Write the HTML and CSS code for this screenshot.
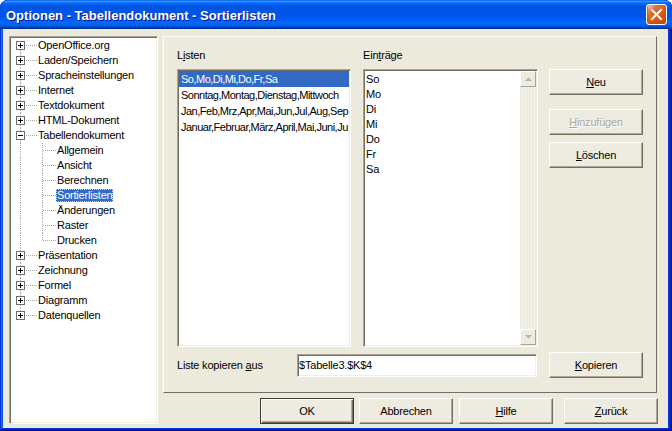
FILE: index.html
```html
<!DOCTYPE html>
<html lang="de">
<head>
<meta charset="utf-8">
<title>Optionen - Tabellendokument - Sortierlisten</title>
<link rel="stylesheet" href="styles.css">
</head>
<body>
<div class="window">
  <div class="titlebar">
    <span class="title">Optionen - Tabellendokument - Sortierlisten</span>
    <span class="close"><svg width="13" height="13" viewBox="0 0 13 13"><path d="M2 2L11 11M11 2L2 11" stroke="#fff" stroke-width="2" stroke-linecap="square"/></svg></span>
  </div>
  <div class="frame">
    <div class="client">
      <div class="tree sunken">
        <div class="row first"><span class="exp"><i class="box plus"></i><i class="hl"></i></span><span class="txt">OpenOffice.org</span></div>
        <div class="row"><span class="exp"><i class="box plus"></i><i class="hl"></i></span><span class="txt">Laden/Speichern</span></div>
        <div class="row"><span class="exp"><i class="box plus"></i><i class="hl"></i></span><span class="txt">Spracheinstellungen</span></div>
        <div class="row"><span class="exp"><i class="box plus"></i><i class="hl"></i></span><span class="txt">Internet</span></div>
        <div class="row"><span class="exp"><i class="box plus"></i><i class="hl"></i></span><span class="txt">Textdokument</span></div>
        <div class="row"><span class="exp"><i class="box plus"></i><i class="hl"></i></span><span class="txt">HTML-Dokument</span></div>
        <div class="row"><span class="exp"><i class="box minus"></i><i class="hl"></i></span><span class="txt">Tabellendokument</span></div>
        <div class="row child"><span class="exp"></span><span class="cexp"><i class="hl"></i></span><span class="txt">Allgemein</span></div>
        <div class="row child"><span class="exp"></span><span class="cexp"><i class="hl"></i></span><span class="txt">Ansicht</span></div>
        <div class="row child"><span class="exp"></span><span class="cexp"><i class="hl"></i></span><span class="txt">Berechnen</span></div>
        <div class="row child"><span class="exp"></span><span class="cexp"><i class="hl"></i></span><span class="txt sel">Sortierlisten</span></div>
        <div class="row child"><span class="exp"></span><span class="cexp"><i class="hl"></i></span><span class="txt">Änderungen</span></div>
        <div class="row child"><span class="exp"></span><span class="cexp"><i class="hl"></i></span><span class="txt">Raster</span></div>
        <div class="row child clast"><span class="exp"></span><span class="cexp"><i class="hl"></i></span><span class="txt">Drucken</span></div>
        <div class="row"><span class="exp"><i class="box plus"></i><i class="hl"></i></span><span class="txt">Präsentation</span></div>
        <div class="row"><span class="exp"><i class="box plus"></i><i class="hl"></i></span><span class="txt">Zeichnung</span></div>
        <div class="row"><span class="exp"><i class="box plus"></i><i class="hl"></i></span><span class="txt">Formel</span></div>
        <div class="row"><span class="exp"><i class="box plus"></i><i class="hl"></i></span><span class="txt">Diagramm</span></div>
        <div class="row last"><span class="exp"><i class="box plus"></i><i class="hl"></i></span><span class="txt">Datenquellen</span></div>
      </div>
      <div class="main">
        <div class="panel">
          <div class="cols">
            <div class="col lists">
              <div class="label">L<u>i</u>sten</div>
              <div class="listbox sunken">
                <div class="lb-row sel">So,Mo,Di,Mi,Do,Fr,Sa</div>
                <div class="lb-row">Sonntag,Montag,Dienstag,Mittwoch</div>
                <div class="lb-row">Jan,Feb,Mrz,Apr,Mai,Jun,Jul,Aug,Sep</div>
                <div class="lb-row">Januar,Februar,März,April,Mai,Juni,Ju</div>
              </div>
            </div>
            <div class="col entries">
              <div class="label">Ein<u>t</u>räge</div>
              <div class="listbox sunken scrolled">
                <div class="items">
                  <div class="en-row">So</div>
                  <div class="en-row">Mo</div>
                  <div class="en-row">Di</div>
                  <div class="en-row">Mi</div>
                  <div class="en-row">Do</div>
                  <div class="en-row">Fr</div>
                  <div class="en-row">Sa</div>
                </div>
                <div class="scrollbar">
                  <span class="sb-btn"><svg width="7" height="4" viewBox="0 0 7 4"><path d="M0 4L3.5 0.5L7 4Z" fill="#B5B2A6"/></svg></span>
                  <span class="sb-track"></span>
                  <span class="sb-btn"><svg width="7" height="4" viewBox="0 0 7 4"><path d="M0 0L3.5 3.5L7 0Z" fill="#B5B2A6"/></svg></span>
                </div>
              </div>
            </div>
            <div class="btncol">
              <span class="btn b-neu"><u>N</u>eu</span>
              <span class="btn b-add disabled"><u>H</u>inzufügen</span>
              <span class="btn b-del"><u>L</u>öschen</span>
            </div>
          </div>
          <div class="copyrow">
            <span class="copylabel">Liste kopieren <u>a</u>us</span>
            <span class="input sunken">$Tabelle3.$K$4</span>
            <span class="btn"><u>K</u>opieren</span>
          </div>
        </div>
        <div class="actions">
          <span class="btn default a-ok">OK</span>
          <span class="btn a-cancel">Abbrechen</span>
          <span class="btn a-help"><u>H</u>ilfe</span>
          <span class="btn"><u>Z</u>urück</span>
        </div>
      </div>
    </div>
  </div>
</div>
</body>
</html>
```

FILE: styles.css
```css
* { box-sizing: border-box; }
html, body { margin: 0; padding: 0; }
body {
  background: #ffffff;
  font-family: "Liberation Sans", Arial, sans-serif;
  font-size: 11px;
  letter-spacing: -0.2px;
  color: #000;
}
u { text-decoration: underline; text-underline-offset: 1px; }

.window {
  width: 672px;
  height: 431px;
  display: flex;
  flex-direction: column;
  background: #0831D9;
  border-radius: 8px 8px 0 0;
  overflow: hidden;
  box-shadow: inset -1px -1px #00138c, inset 1px 1px #0831d9, inset -2px -2px #001ea0, inset 2px 2px #166aee, inset -3px -3px #003bda, inset 3px 3px #0855dd;
}

.titlebar {
  height: 29px;
  flex: none;
  display: flex;
  align-items: center;
  justify-content: space-between;
  padding: 0 5px 0 6px;
  background: linear-gradient(to bottom, #0058EE 0%, #3A93FF 4%, #288EFF 6%, #127DFF 8%, #036FFC 10%, #0262EE 14%, #0057E5 20%, #0054E3 24%, #0055EB 56%, #005BF5 66%, #026AFE 76%, #0062EF 86%, #0052D6 92%, #0040AB 94%, #003092 100%);
  border-radius: 8px 8px 0 0;
}
.title {
  color: #fff;
  font-weight: bold;
  font-size: 13px;
  letter-spacing: 0;
  text-shadow: 1px 1px #0F1089;
  padding-top: 1px;
}
.close {
  width: 21px;
  height: 21px;
  border: 1px solid #fff;
  border-radius: 3px;
  display: flex;
  align-items: center;
  justify-content: center;
  background: radial-gradient(circle at 90% 90%, #CC4600 0%, #DC6527 55%, #CD7546 70%, #FFCCB2 90%, #fff 100%);
  box-shadow: inset 0 -1px 2px 1px #DA4600;
}

.frame {
  flex: 1;
  display: flex;
  padding: 0 4px 4px 3px;
}
.client {
  flex: 1;
  display: flex;
  gap: 5px;
  padding: 7px 10px 4px 6px;
  background: repeating-linear-gradient(90deg, #ECE9D8 0px, #ECE9D8 3px, #EFECE1 3px, #EFECE1 4px);
}

.sunken {
  background: #fff;
  border: 1px solid;
  border-color: #A7A496 #fff #fff #A7A496;
  box-shadow: inset 1px 1px #716F64, inset -1px -1px #F1EFE2;
  padding: 1px;
}

/* tree */
.tree {
  width: 149px;
  flex: none;
  overflow: hidden;
}
.row {
  display: flex;
  align-items: center;
  height: 15px;
  white-space: nowrap;
}
.exp, .cexp {
  flex: none;
  height: 15px;
  display: flex;
  align-items: center;
}
.exp {
  width: 26px;
  background: linear-gradient(to bottom, #A8A8A8 1px, transparent 1px) 9px 0 / 1px 2px repeat-y;
}
.first .exp {
  background: linear-gradient(#fff, #fff) 0 0 / 100% 7px no-repeat,
              linear-gradient(to bottom, #A8A8A8 1px, transparent 1px) 9px 0 / 1px 2px repeat-y;
}
.last .exp {
  background: linear-gradient(#fff, #fff) 0 8px / 100% 7px no-repeat,
              linear-gradient(to bottom, #A8A8A8 1px, transparent 1px) 9px 0 / 1px 2px repeat-y;
}
.cexp {
  width: 19px;
  background: linear-gradient(to bottom, #A8A8A8 1px, transparent 1px) 5px 0 / 1px 2px repeat-y;
}
.clast .cexp {
  background: linear-gradient(#fff, #fff) 0 8px / 100% 7px no-repeat,
              linear-gradient(to bottom, #A8A8A8 1px, transparent 1px) 5px 0 / 1px 2px repeat-y;
}
.box {
  flex: none;
  width: 9px;
  height: 9px;
  margin-left: 5px;
  border: 1px solid #6E6E6E;
  background-color: #fff;
}
.plus {
  background: linear-gradient(#000, #000) 1px 3px / 5px 1px no-repeat,
              linear-gradient(#000, #000) 3px 1px / 1px 5px no-repeat,
              #fff;
}
.minus {
  background: linear-gradient(#000, #000) 1px 3px / 5px 1px no-repeat, #fff;
}
.hl {
  flex: 1;
  height: 0;
  margin-left: 1px;
  border-top: 1px dotted #A8A8A8;
}
.cexp .hl { margin-left: 6px; }
.txt {
  height: 13px;
  line-height: 13px;
  padding: 0 1px;
}
.txt.sel {
  background: #316AC5;
  color: #fff;
  outline: 1px dotted #C9D8F0;
  outline-offset: -1px;
}

/* main */
.main {
  width: 495px;
  flex: none;
  display: flex;
  flex-direction: column;
}
.panel {
  width: 494px;
  height: 357px;
  flex: none;
  border: 1px solid;
  border-color: #fff #716F64 #716F64 #fff;
  padding: 12px 12px 0 13px;
}
.cols {
  display: flex;
}
.col { display: flex; flex-direction: column; }
.lists { width: 174px; margin-right: 12px; }
.entries { width: 175px; margin-right: 11px; }
.label {
  height: 13px;
  line-height: 13px;
  margin-bottom: 7px;
  white-space: nowrap;
}
.listbox {
  height: 278px;
  overflow: hidden;
}
.lb-row {
  height: 16px;
  line-height: 16px;
  padding-left: 2px;
  white-space: nowrap;
  overflow: hidden;
  letter-spacing: -0.5px;
}
.lb-row.sel { background: #316AC5; color: #fff; }

.scrolled { display: flex; }
.items { flex: 1; padding: 1px 0 0 1px; overflow: hidden; }
.en-row { height: 15px; line-height: 15px; white-space: nowrap; }
.scrollbar {
  width: 17px;
  flex: none;
  display: flex;
  flex-direction: column;
  background: repeating-linear-gradient(90deg, #EEEBDF 0px, #EEEBDF 2px, #F4F2EA 2px, #F4F2EA 3px);
  border-left: 1px solid #fff;
}
.sb-btn {
  height: 16px;
  flex: none;
  display: flex;
  align-items: center;
  justify-content: center;
  border: 1px solid;
  border-color: #fff #A7A496 #A7A496 #fff;
  background: #EEEBE0;
}
.sb-track { flex: 1; }

.btncol {
  width: 94px;
  padding-top: 20px;
  display: flex;
  flex-direction: column;
}
.btn {
  width: 94px;
  height: 26px;
  flex: none;
  display: flex;
  align-items: center;
  justify-content: center;
  white-space: nowrap;
  border: 1px solid;
  border-color: #fff #716F64 #716F64 #fff;
  box-shadow: inset -1px -1px #ACA899;
  background: #EEEBE1;
  padding-bottom: 1px;
}
.b-add { margin-top: 14px; }
.b-del { margin-top: 7px; }
.btn.disabled {
  color: #ACA899;
  text-shadow: 1px 1px #fff;
}
.btn.default {
  border: 1px solid #3B3A35;
  box-shadow: inset 1px 1px #fff, inset -1px -1px #716F64, inset -2px -2px #ACA899;
}

.copyrow {
  display: flex;
  align-items: center;
  height: 26px;
  margin-top: 5px;
}
.copylabel {
  width: 120px;
  flex: none;
  white-space: nowrap;
}
.input {
  width: 240px;
  height: 23px;
  flex: none;
  margin-right: 12px;
  display: flex;
  align-items: center;
  white-space: nowrap;
}

.actions {
  display: flex;
  justify-content: flex-end;
  margin-top: 5px;
  height: 26px;
  flex: none;
}
.a-ok { margin-right: 5px; }
.a-cancel { margin-right: 6px; }
.a-help { margin-right: 11px; }
```
